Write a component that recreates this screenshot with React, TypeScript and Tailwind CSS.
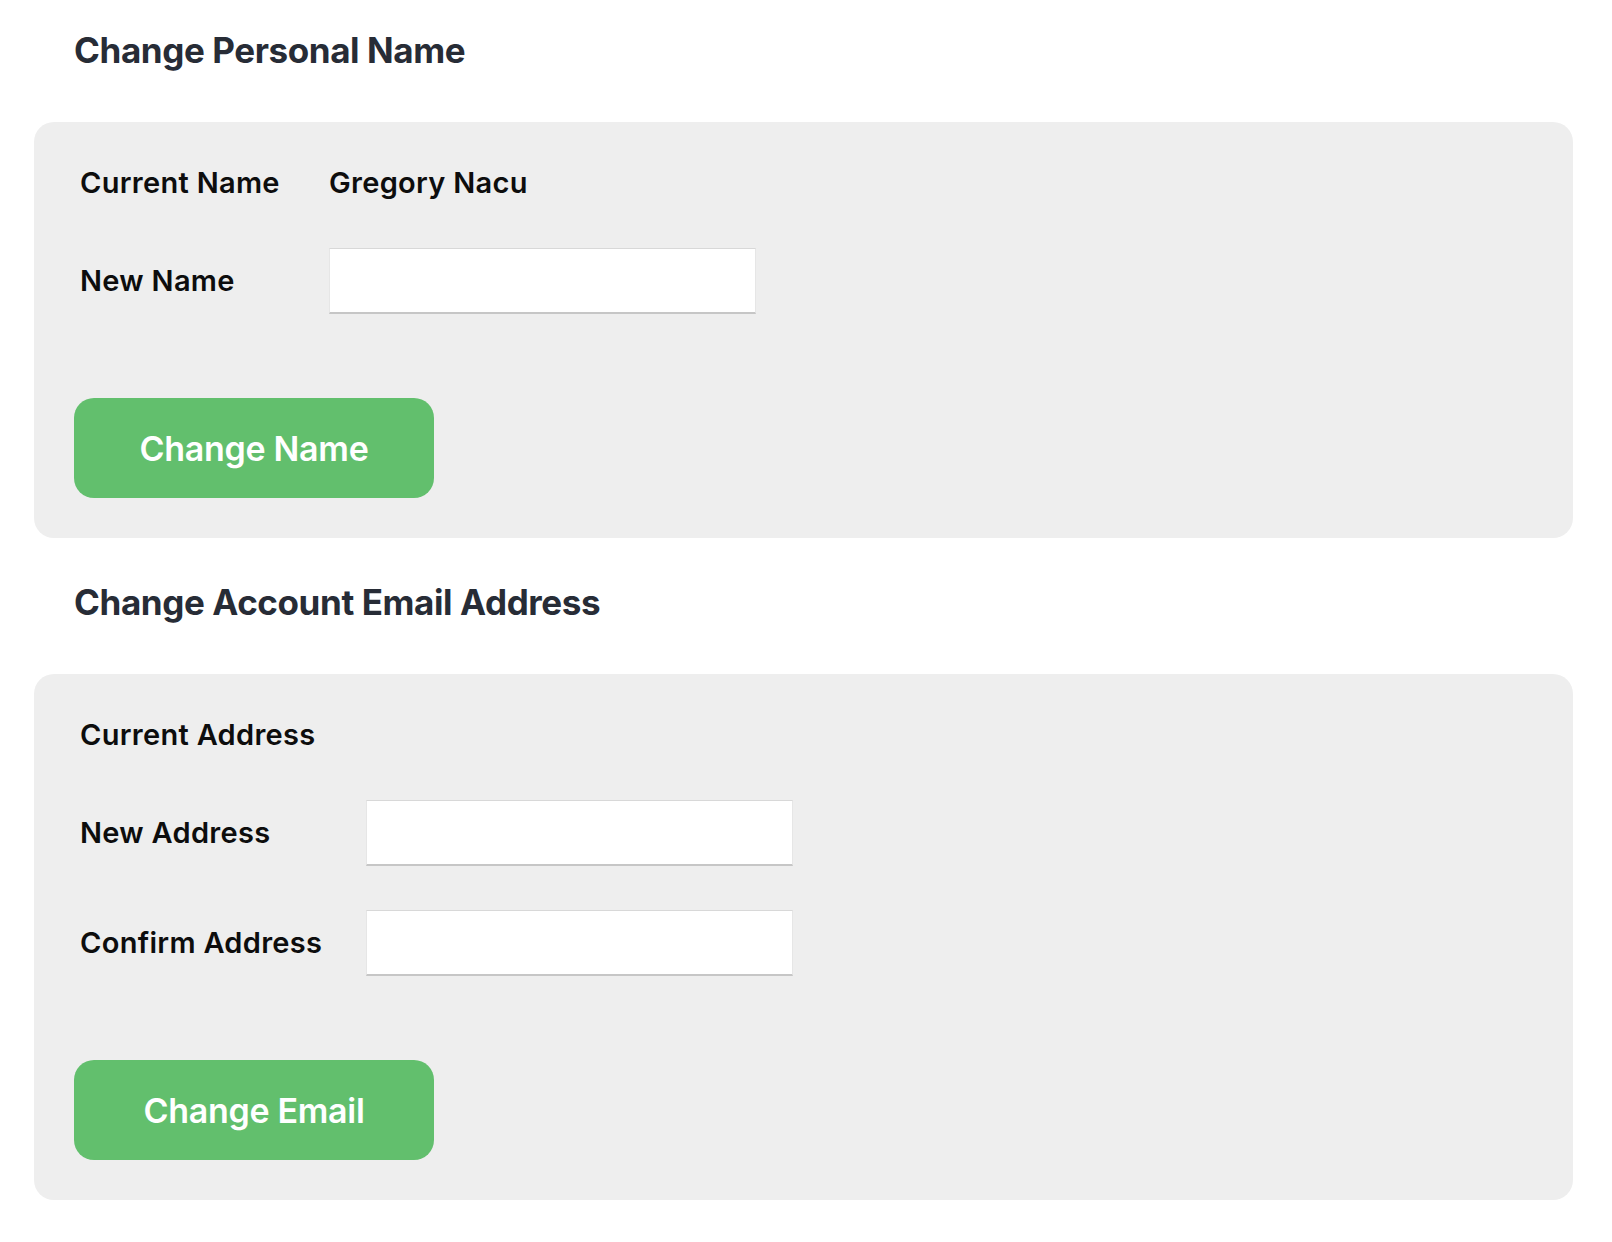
import React from 'react';

type Row = { label: string; value?: string; input?: boolean };

function Section({
  title,
  rows,
  labelWidth,
  button,
  last,
}: {
  title: string;
  rows: Row[];
  labelWidth: string;
  button: string;
  last?: boolean;
}) {
  return (
    <section className={last ? '' : 'mb-[14px]'}>
      <div className="h-[122px] pt-[28px] pl-[40px]">
        <h2 className="text-[35px] leading-[44px] font-bold tracking-[-0.4px] text-[#272c36]">{title}</h2>
      </div>
      <div className="rounded-[20px] bg-[#eeeeee] p-10">
        <div className="flex flex-col gap-[44px]">
          {rows.map((row) => (
            <div key={row.label} className={`flex items-center ${row.input ? 'h-[66px]' : 'h-[42px]'}`}>
              <div className={`${labelWidth} shrink-0 pl-[6px] text-[29px] font-semibold tracking-[0.3px] text-[#0d0d0d]`}>
                {row.label}
              </div>
              {row.input ? (
                <input
                  type="text"
                  className="h-[66px] w-[427px] bg-white border border-[#e6e6e6] border-t-[#d8d8d8] border-b-2 border-b-[#c6c6c6] outline-none px-3 text-[28px]"
                />
              ) : (
                <div className="text-[29px] font-semibold tracking-[0.3px] text-[#0d0d0d]">{row.value}</div>
              )}
            </div>
          ))}
        </div>
        <button className="mt-[84px] flex h-[100px] w-[360px] items-center justify-center rounded-[20px] bg-[#62bf6d] text-[34px] font-semibold tracking-[-0.3px] text-white">
          {button}
        </button>
      </div>
    </section>
  );
}

function App() {
  return (
    <div className="min-h-screen bg-white" style={{ fontFamily: 'Inter, "Noto Sans", sans-serif' }}>
      <div className="ml-[34px] w-[1539px]">
        {/* Name */}
        <Section
          title="Change Personal Name"
          labelWidth="w-[255px]"
          rows={[
            { label: 'Current Name', value: 'Gregory Nacu' },
            { label: 'New Name', input: true },
          ]}
          button="Change Name"
        />

        {/* Email */}
        <Section
          title="Change Account Email Address"
          labelWidth="w-[292px]"
          rows={[
            { label: 'Current Address', value: '' },
            { label: 'New Address', input: true },
            { label: 'Confirm Address', input: true },
          ]}
          button="Change Email"
          last
        />
      </div>
    </div>
  );
}

export default App;
